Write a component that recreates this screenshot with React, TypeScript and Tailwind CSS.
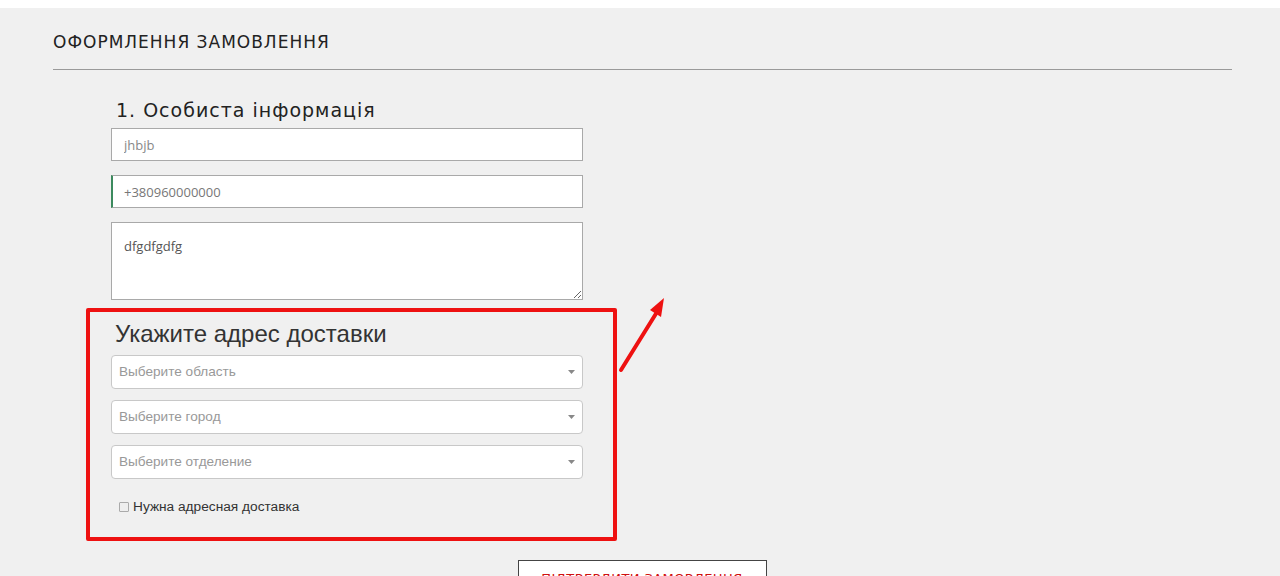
import { useState } from "react";

const selects = ["Выберите область", "Выберите город", "Выберите отделение"];

function Caret() {
  return (
    <svg width="7" height="4" viewBox="0 0 7 4" className="absolute right-[7px] top-[14px]">
      <path d="M0 0h7L3.5 4z" fill="#888" />
    </svg>
  );
}

export default function App() {
  const [needAddress, setNeedAddress] = useState(false);

  return (
    <div className="min-h-[576px] bg-white pt-[8px] font-['Liberation_Sans',Arial,sans-serif]">
      <div className="bg-[#f0f0f0] min-h-[568px] pl-[53px] pr-[48px] pt-[24px] relative">
        {/* Title */}
        <h1 className="text-[17px] leading-[20px] text-[#222] tracking-[1px] font-['DejaVu_Sans',sans-serif] pb-[17px] border-b border-[#9a9a9a]">
          ОФОРМЛЕННЯ ЗАМОВЛЕННЯ
        </h1>

        <div className="ml-[58px] w-[472px] pt-[29px]">
          <h2 className="ml-[5px] text-[19px] leading-[22px] text-[#222] tracking-[1px] font-['DejaVu_Sans',sans-serif]">
            1. Особиста інформація
          </h2>

          {/* Personal info */}
          <div className="mt-[7px] flex flex-col">
            <input
              defaultValue="jhbjb"
              className="h-[33px] bg-white border border-[#a9a9a9] px-[12px] text-[13px] text-[#888] font-['Open_Sans',sans-serif] outline-none"
            />
            <input
              defaultValue="+380960000000"
              className="mt-[14px] h-[33px] bg-white border border-[#a9a9a9] border-l-[2px] border-l-[#3c8a5e] px-[11px] text-[13px] text-[#777] font-['Open_Sans',sans-serif] outline-none"
            />
            <textarea
              defaultValue="dfgdfgdfg"
              className="mt-[14px] h-[78px] bg-white border border-[#a9a9a9] px-[12px] py-[14px] text-[13px] text-[#555] font-['Open_Sans',sans-serif] outline-none resize-y"
            />
          </div>

          {/* Delivery */}
          <div className="relative mt-[8px]">
            <div className="absolute -left-[25px] top-0 w-[531px] h-[233px] border-[4px] border-[#ee1111] rounded-[2px] pointer-events-none" />
            <h2 className="pt-[13px] ml-[4px] text-[24px] leading-[26px] text-[#333]">
              Укажите адрес доставки
            </h2>
            <div className="mt-[8px] flex flex-col gap-[11px]">
              {selects.map((s) => (
                <div
                  key={s}
                  className="relative h-[34px] bg-white border border-[#c8c8c8] rounded-[4px] pl-[7px] flex items-center text-[13.6px] text-[#999]"
                >
                  {s}
                  <Caret />
                </div>
              ))}
            </div>
            <label className="mt-[18px] ml-[8px] flex items-center gap-[4px] text-[13.7px] text-[#333] cursor-pointer">
              <input
                type="checkbox"
                checked={needAddress}
                onChange={(e) => setNeedAddress(e.target.checked)}
                className="w-[10px] h-[10px] appearance-none border border-[#aaa] bg-[#eee] rounded-[1px]"
              />
              Нужна адресная доставка
            </label>
          </div>
        </div>

        {/* Arrow */}
        <svg width="60" height="90" viewBox="0 0 60 90" className="absolute left-[613px] top-[282px]">
          <line x1="8" y1="80" x2="44" y2="22" stroke="#ee1111" strokeWidth="4" strokeLinecap="round" />
          <path d="M51 8L37 20L48 27z" fill="#ee1111" />
        </svg>

        {/* Submit */}
        <div className="flex justify-center mt-[42px]">
          <button className="ml-[-1px] w-[249px] h-[40px] bg-white border border-[#444] text-[#d01010] text-[13px] tracking-[0.4px] font-['DejaVu_Sans',sans-serif] items-start flex justify-center">
            <span className="mt-[8px]">ПІДТВЕРДИТИ ЗАМОВЛЕННЯ</span>
          </button>
        </div>
      </div>
    </div>
  );
}
